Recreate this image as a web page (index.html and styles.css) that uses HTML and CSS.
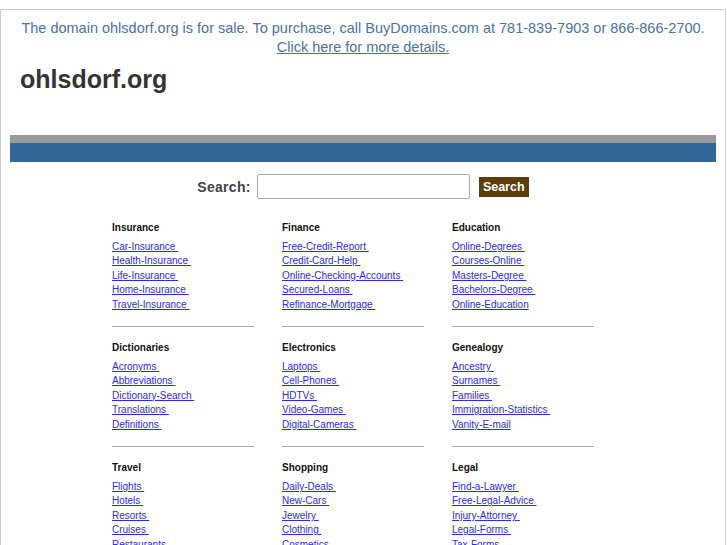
FILE: index.html
```html
<!DOCTYPE html>
<html>
<head>
<meta charset="utf-8">
<title>ohlsdorf.org</title>
<link rel="stylesheet" href="styles.css">
</head>
<body>
<div class="page">
  <div class="notice">
    The domain ohlsdorf.org is for sale. To purchase, call BuyDomains.com at 781-839-7903 or 866-866-2700.<br>
    <a href="#">Click here for more details.</a>
  </div>
  <h1 class="title">ohlsdorf.org</h1>
  <div class="bar"><div class="bar-gray"></div><div class="bar-blue"></div></div>
  <form class="search">
    <label class="search-label">Search:</label>
    <input class="search-input" type="text">
    <button class="search-btn" type="button">Search</button>
  </form>
  <div class="cats">
    <div class="cat"><h3>Insurance</h3><ul><li><a href="#">Car-Insurance </a></li><li><a href="#">Health-Insurance </a></li><li><a href="#">Life-Insurance </a></li><li><a href="#">Home-Insurance </a></li><li><a href="#">Travel-Insurance </a></li></ul><hr></div>
    <div class="cat"><h3>Finance</h3><ul><li><a href="#">Free-Credit-Report </a></li><li><a href="#">Credit-Card-Help </a></li><li><a href="#">Online-Checking-Accounts </a></li><li><a href="#">Secured-Loans </a></li><li><a href="#">Refinance-Mortgage </a></li></ul><hr></div>
    <div class="cat"><h3>Education</h3><ul><li><a href="#">Online-Degrees </a></li><li><a href="#">Courses-Online </a></li><li><a href="#">Masters-Degree </a></li><li><a href="#">Bachelors-Degree </a></li><li><a href="#">Online-Education</a></li></ul><hr></div>
    <div class="cat"><h3>Dictionaries</h3><ul><li><a href="#">Acronyms </a></li><li><a href="#">Abbreviations </a></li><li><a href="#">Dictionary-Search </a></li><li><a href="#">Translations </a></li><li><a href="#">Definitions </a></li></ul><hr></div>
    <div class="cat"><h3>Electronics</h3><ul><li><a href="#">Laptops </a></li><li><a href="#">Cell-Phones </a></li><li><a href="#">HDTVs </a></li><li><a href="#">Video-Games </a></li><li><a href="#">Digital-Cameras </a></li></ul><hr></div>
    <div class="cat"><h3>Genealogy</h3><ul><li><a href="#">Ancestry </a></li><li><a href="#">Surnames </a></li><li><a href="#">Families </a></li><li><a href="#">Immigration-Statistics </a></li><li><a href="#">Vanity-E-mail</a></li></ul><hr></div>
    <div class="cat"><h3>Travel</h3><ul><li><a href="#">Flights </a></li><li><a href="#">Hotels </a></li><li><a href="#">Resorts </a></li><li><a href="#">Cruises </a></li><li><a href="#">Restaurants </a></li></ul><hr></div>
    <div class="cat"><h3>Shopping</h3><ul><li><a href="#">Daily-Deals </a></li><li><a href="#">New-Cars </a></li><li><a href="#">Jewelry </a></li><li><a href="#">Clothing </a></li><li><a href="#">Cosmetics </a></li></ul><hr></div>
    <div class="cat"><h3>Legal</h3><ul><li><a href="#">Find-a-Lawyer </a></li><li><a href="#">Free-Legal-Advice </a></li><li><a href="#">Injury-Attorney </a></li><li><a href="#">Legal-Forms </a></li><li><a href="#">Tax-Forms </a></li></ul><hr></div>
  </div>
</div>
</body>
</html>
```

FILE: styles.css
```css
html, body {
  margin: 0;
  padding: 0;
  background: #fff;
}
body {
  font-family: "Liberation Sans", Arial, sans-serif;
  overflow: hidden;
}
.page {
  margin-top: 9px;
  width: 724px;
  border: 1px solid #cccccc;
  border-bottom: none;
  min-height: 600px;
}
.notice {
  text-align: center;
  font-size: 14.5px;
  line-height: 19px;
  color: #4b73a5;
  padding-top: 9px;
}
.notice a {
  color: #4b73a5;
  text-decoration: underline;
}
.title {
  margin: 7px 0 0 19px;
  font-size: 25px;
  line-height: 30px;
  font-weight: bold;
  color: #333333;
}
.bar {
  margin: 41px 9px 0 9px;
}
.bar-gray {
  height: 8px;
  background: #999999;
}
.bar-blue {
  height: 19px;
  background: #336699;
}
.search {
  margin: 12px 0 0 0;
  display: flex;
  justify-content: center;
  align-items: center;
  height: 25px;
}
.search-label {
  font-size: 14px;
  font-weight: bold;
  color: #444444;
  letter-spacing: 0.3px;
  margin-right: 6px;
}
.search-input {
  width: 213px;
  height: 25px;
  box-sizing: border-box;
  border: 1px solid #a8a8a8;
  border-radius: 2px;
  margin: 0 9px 0 0;
  padding: 0;
}
.search-btn {
  width: 50px;
  height: 20px;
  background: #5c3d0b;
  color: #ffffff;
  border: none;
  padding: 0;
  font-family: "Liberation Sans", Arial, sans-serif;
  font-size: 12.5px;
  font-weight: bold;
}
.cats {
  margin: 22px auto 0 auto;
  width: 510px;
  display: grid;
  grid-template-columns: 170px 170px 170px;
}
.cat {
  padding-left: 4px;
}
.cat h3 {
  margin: 0;
  font-size: 10px;
  line-height: 14px;
  font-weight: bold;
  color: #111111;
}
.cat ul {
  list-style: none;
  margin: 5px 0 0 0;
  padding: 0;
}
.cat li {
  font-size: 10px;
  line-height: 14.4px;
  white-space: pre;
}
.cat a {
  color: #2a2af0;
  text-decoration: underline;
}
.cat hr {
  width: 142px;
  margin: 14px 0 14px 0;
  border: none;
  border-top: 1px solid #aaaaaa;
  height: 0;
}
```
